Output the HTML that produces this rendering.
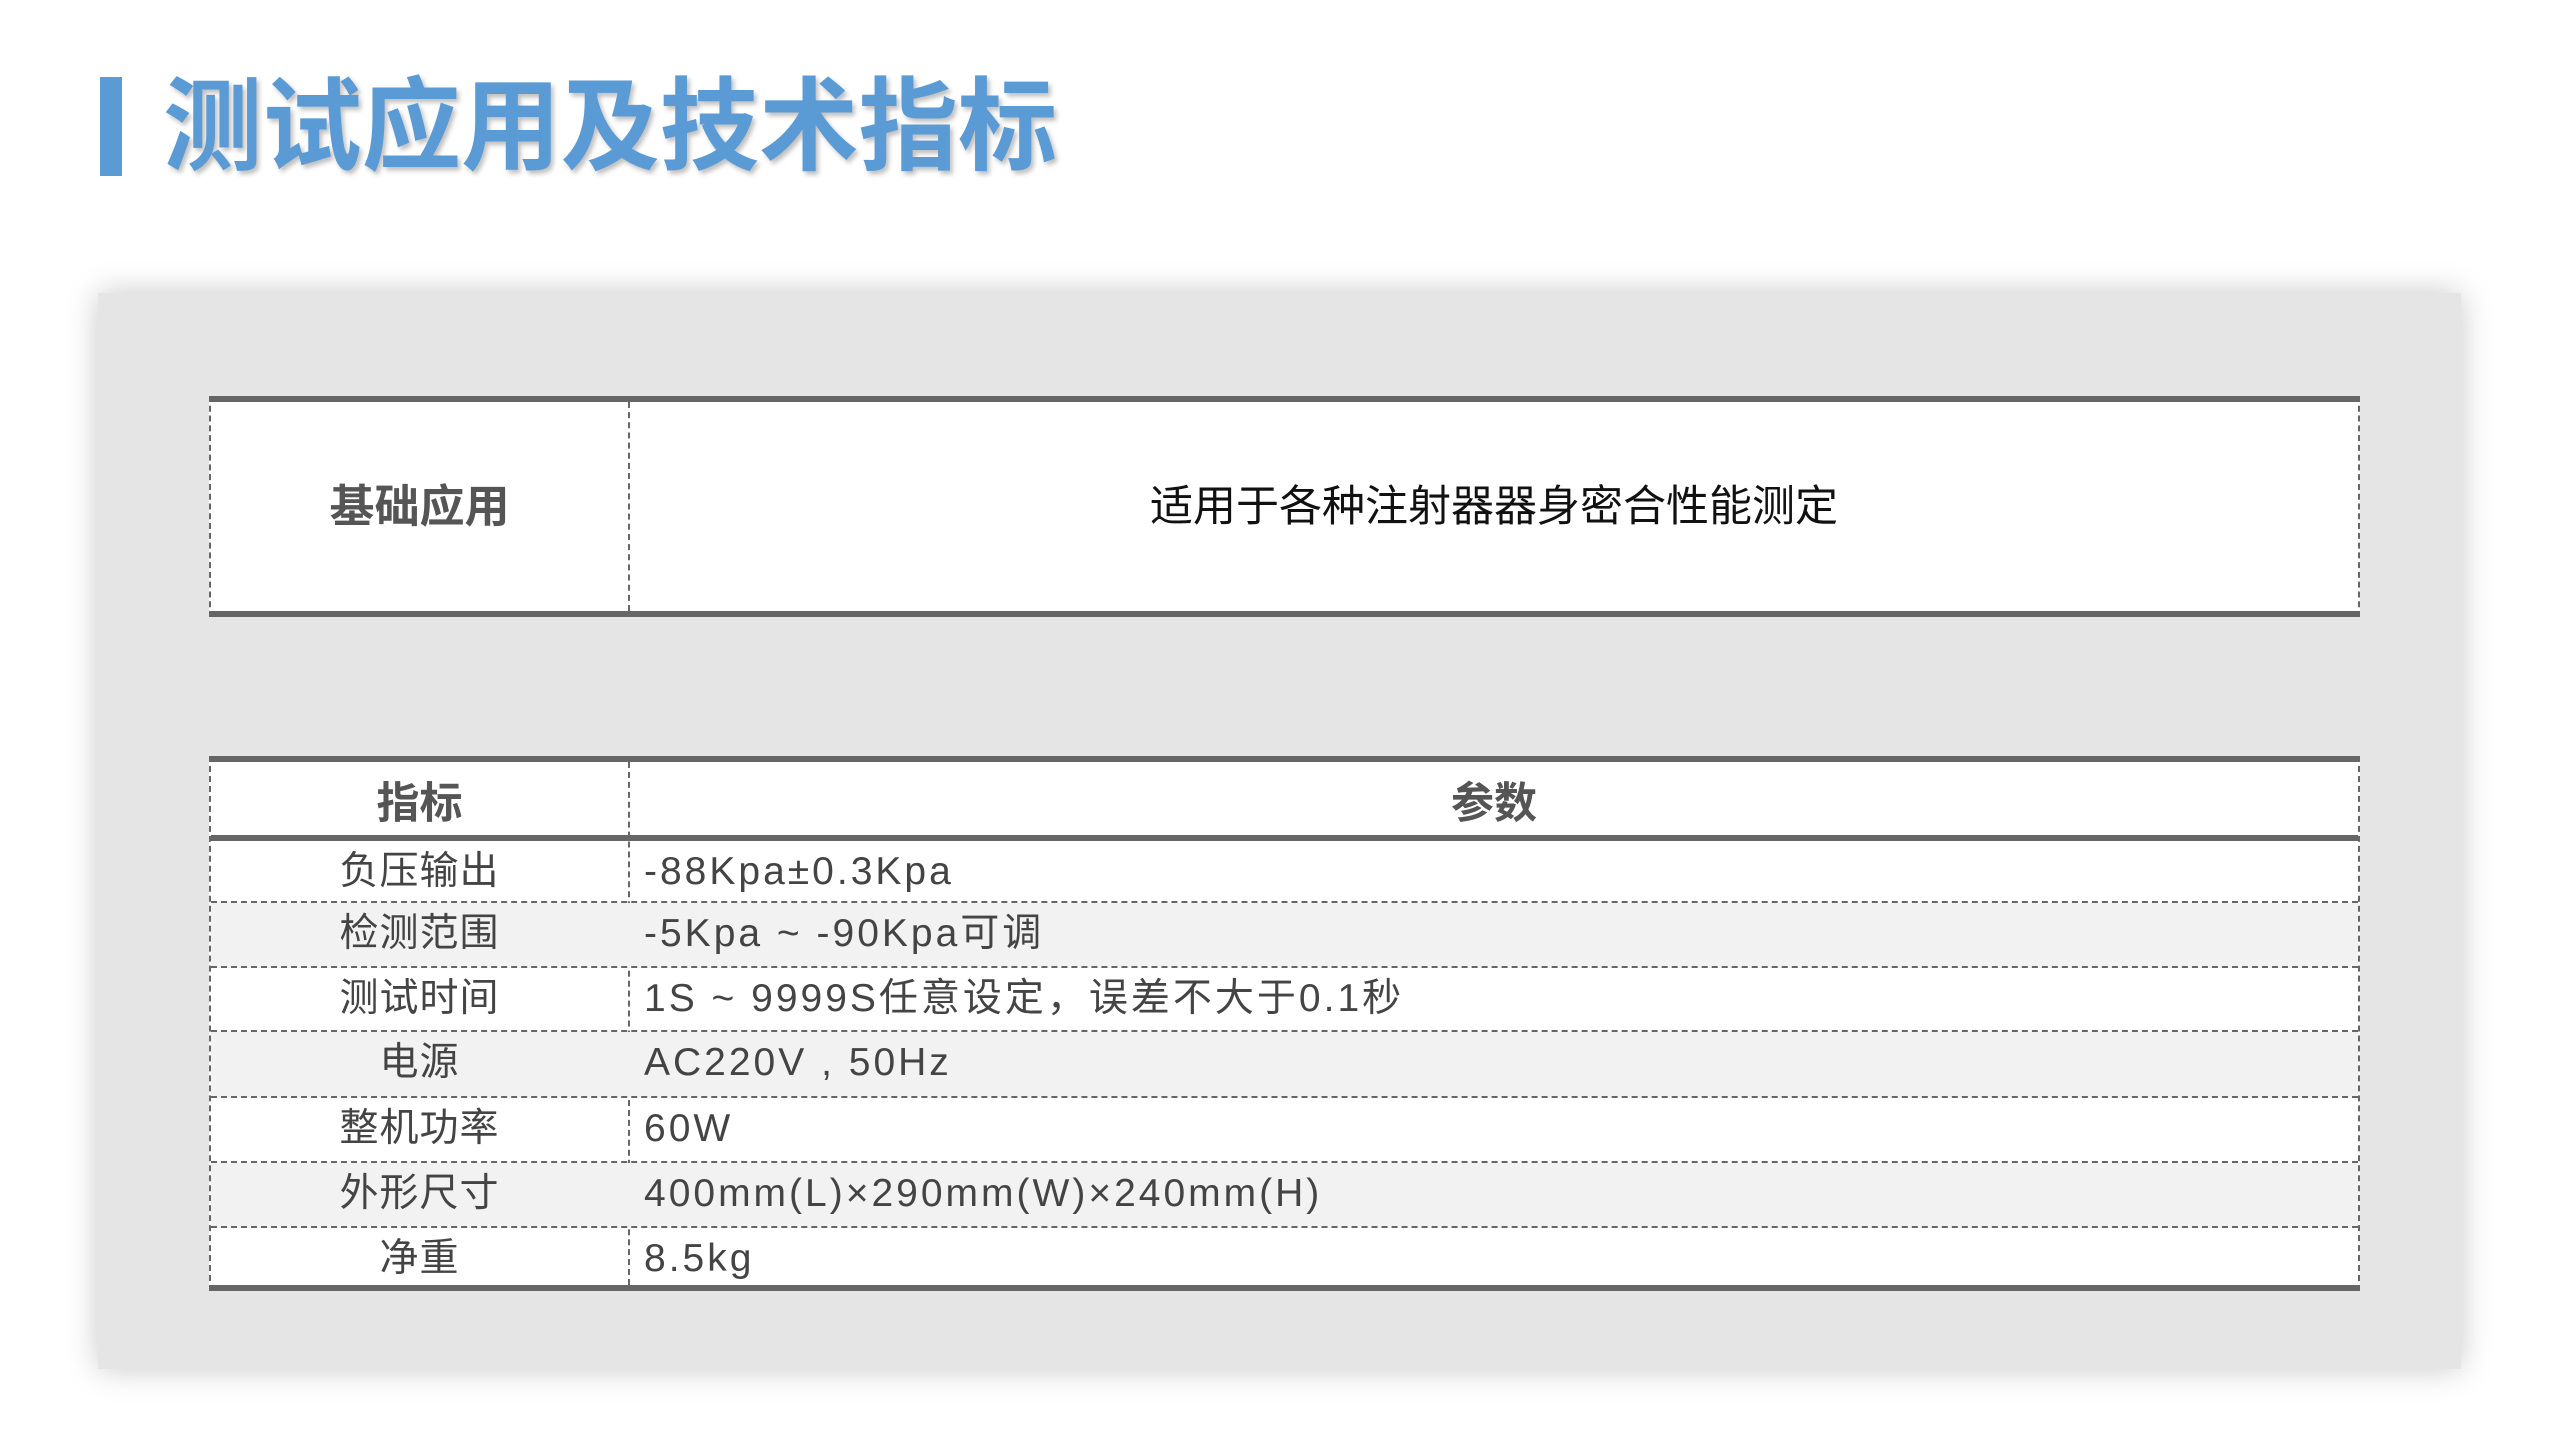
<!DOCTYPE html>
<html><head><meta charset="utf-8"><style>
*{margin:0;padding:0;box-sizing:border-box}
body{width:2560px;height:1440px;background:#fff;position:relative;overflow:hidden;font-family:"Liberation Sans","Noto Sans CJK SC",sans-serif}
.bar{position:absolute;left:100px;top:77px;width:22px;height:99px;background:#5b9bd5}
.title{position:absolute;left:163px;top:62px;font-size:108px;line-height:130px;font-weight:bold;color:#5b9bd5;letter-spacing:0px;transform:scale(0.92,0.94);transform-origin:0 50%;text-shadow:3px 4px 5px rgba(0,0,0,.25);white-space:nowrap}
.card{position:absolute;left:98px;top:293px;width:2363px;height:1076px;background:#e5e5e5;box-shadow:0 0 30px rgba(0,0,0,.22)}
.t1{position:absolute;left:209px;top:396px;width:2151px;height:221px;background:#fff;border-top:6px solid #666;border-bottom:6px solid #666;border-left:2px dashed #666;border-right:2px dashed #666}
.vd{position:absolute;left:417px;top:0;bottom:0;border-left:2px dashed #666}
.c1{position:absolute;left:0;width:417px;text-align:center;color:#555;font-weight:bold}
.c2{position:absolute;left:419px;right:0;text-align:center;color:#111}
.t2{position:absolute;left:209px;top:756px;width:2151px;height:535px;background:#fff;border-top:6px solid #666;border-bottom:6px solid #666;border-left:2px dashed #666;border-right:2px dashed #666}
.hd{position:absolute;left:0;right:0;top:0;height:79px;border-bottom:6px solid #666}
.row{position:absolute;left:0;right:0;height:65px;border-bottom:2px dashed #666;font-size:39px;line-height:62px;color:#444}
.row.g{background:#f2f2f2}
.row .a{position:absolute;left:0;width:417px;text-align:center;letter-spacing:1px}
.row .b{position:absolute;left:433px;letter-spacing:3px}
</style></head><body>
<div class="bar"></div>
<div class="title">测试应用及技术指标</div>
<div class="card"></div>
<div class="t1">
 <div class="vd"></div>
 <div class="c1" style="top:80px;font-size:45px;line-height:50px">基础应用</div>
 <div class="c2" style="top:80px;font-size:43px;line-height:50px">适用于各种注射器器身密合性能测定</div>
</div>
<div class="t2">
 <div class="vd"></div>
 <div class="hd">
  <div class="c1" style="top:12px;font-size:43px;line-height:60px">指标</div>
  <div class="c2" style="top:12px;font-size:43px;line-height:60px;color:#555;font-weight:bold">参数</div>
 </div>
 <div class="row" style="top:79px;height:62px"><span class="a">负压输出</span><span class="b">-88Kpa±0.3Kpa</span></div>
 <div class="row g" style="top:141px"><span class="a">检测范围</span><span class="b">-5Kpa ~ -90Kpa可调</span></div>
 <div class="row" style="top:206px;height:64px"><span class="a">测试时间</span><span class="b">1S ~ 9999S任意设定，误差不大于0.1秒</span></div>
 <div class="row g" style="top:270px;height:66px"><span class="a">电源</span><span class="b">AC220V , 50Hz</span></div>
 <div class="row" style="top:336px"><span class="a">整机功率</span><span class="b">60W</span></div>
 <div class="row g" style="top:401px"><span class="a">外形尺寸</span><span class="b">400mm(L)×290mm(W)×240mm(H)</span></div>
 <div class="row" style="top:466px;height:63px;border-bottom:none"><span class="a">净重</span><span class="b">8.5kg</span></div>
</div>
</body></html>
